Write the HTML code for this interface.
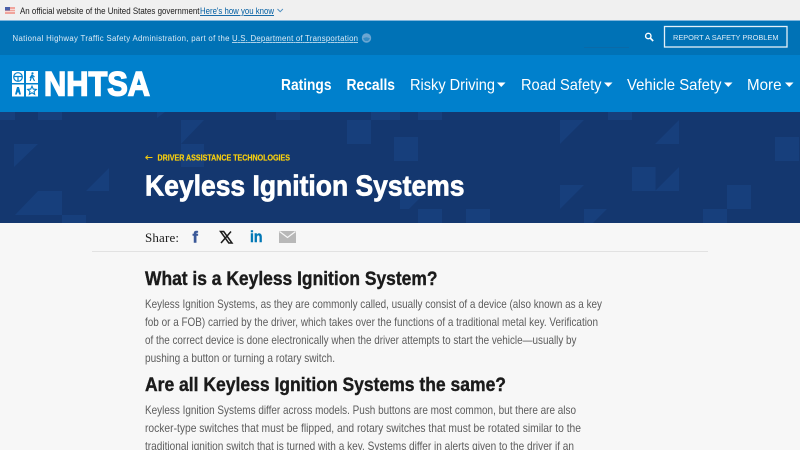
<!DOCTYPE html>
<html lang="en"><head><meta charset="utf-8"><title>Keyless Ignition Systems | NHTSA</title>
<style>
html,body{margin:0;padding:0;width:800px;height:450px;overflow:hidden;background:#f7f7f7}
svg{display:block}
text{font-family:"Liberation Sans",sans-serif}
.p{font-size:11.6px;fill:#5c5c5c}
.h{font-size:19.5px;font-weight:700;fill:#1b1b1b;stroke:#1b1b1b;stroke-width:.4px}
.n{font-size:15.6px;fill:#fff}
.g{font-size:7.8px;fill:#dcebf6}
</style></head><body>
<svg width="800" height="450" viewBox="0 0 800 450" xmlns="http://www.w3.org/2000/svg">
<rect width="800" height="450" fill="#f7f7f7"/>
<!-- gov banner -->
<rect width="800" height="21" fill="#f0f0f0"/>
<rect y="20" width="800" height="1" fill="#7fb5dc"/>
<rect x="5" y="7" width="10" height="7" fill="#f0a49c"/><rect x="5" y="9" width="10" height="1" fill="#f7d8d4"/><rect x="5" y="11" width="10" height="1" fill="#f7d8d4"/><rect x="5" y="7" width="5" height="3.500" fill="#4a5fa8"/>
<text x="20" y="14" font-size="9" fill="#1b1b1b" textLength="179.500" lengthAdjust="spacingAndGlyphs">An official website of the United States government</text>
<text x="200" y="14" font-size="9" fill="#005ea2" text-decoration="underline" textLength="74" lengthAdjust="spacingAndGlyphs">Here's how you know</text>
<path d="M277.500 9l2.700 2.700 2.700-2.700" fill="none" stroke="#4f8fc0" stroke-width="1"/>
<!-- agency bar -->
<rect y="21" width="800" height="34" fill="#0072b6"/>
<text x="12.500" y="41" class="g" textLength="217" lengthAdjust="spacing">National Highway Traffic Safety Administration, part of the</text>
<text x="232" y="41" class="g" text-decoration="underline" textLength="126" lengthAdjust="spacing">U.S. Department of Transportation</text>
<circle cx="366.500" cy="38" r="4.700" fill="#6ba6d2"/><path d="M363 38.500q3.500-2.500 7 0l-2 2.500h-3z" fill="#0072b6" opacity=".5"/>
<rect x="584" y="47" width="45" height="1" fill="#0a6aa8"/>
<circle cx="648.300" cy="36" r="2.700" fill="none" stroke="#fff" stroke-width="1.400"/><path d="M650.200 38l3 3" stroke="#fff" stroke-width="1.600"/>
<rect x="664.500" y="26.500" width="122.500" height="20.500" fill="none" stroke="#e4f0f8" stroke-width="1.300"/>
<text x="673" y="40" font-size="7.400" fill="#dcebf6" textLength="105.500" lengthAdjust="spacing">REPORT A SAFETY PROBLEM</text>
<!-- main nav -->
<rect y="55" width="800" height="57" fill="#0080cc"/>
<rect x="12" y="71" width="12" height="12" fill="#fff"/><rect x="26" y="71" width="12" height="12" fill="#fff"/><rect x="12" y="84.500" width="12" height="12" fill="#fff"/><rect x="26" y="84.500" width="12" height="12" fill="#fff"/>
<circle cx="18" cy="77" r="4.300" fill="none" stroke="#0080cc" stroke-width="1.200"/><path d="M14 76.500h8M18 77v4" stroke="#0080cc" stroke-width="1.200"/>
<circle cx="32.500" cy="73.300" r="1.100" fill="#0080cc"/><path d="M32 75l-1.800 6M32.200 76.500l2.300 4.500M30 78l2-3 2.500 2" fill="none" stroke="#0080cc" stroke-width="1.200"/>
<path d="M15 94.500l2-7.500h2l2 7.500h-2l-.3-2h-1.400l-.3 2z" fill="#0080cc"/>
<path d="M32 86.200l1.300 2.900 3 .3-2.300 2 .7 3-2.700-1.600-2.700 1.600.7-3-2.300-2 3-.3z" fill="none" stroke="#0080cc" stroke-width="1.100"/>
<text x="44" y="95.700" font-size="34.500" font-weight="700" fill="#fff" stroke="#fff" stroke-width="1.500" textLength="106" lengthAdjust="spacingAndGlyphs">NHTSA</text>
<text x="281" y="90" class="n" font-weight="700" textLength="50.500" lengthAdjust="spacingAndGlyphs">Ratings</text>
<text x="346.500" y="90" class="n" font-weight="700" textLength="48.500" lengthAdjust="spacingAndGlyphs">Recalls</text>
<text x="410" y="90" class="n" textLength="85" lengthAdjust="spacingAndGlyphs">Risky Driving</text>
<path d="M497 82.500h8.500l-4.250 4.500z" fill="#fff"/>
<text x="521" y="90" class="n" textLength="80.500" lengthAdjust="spacingAndGlyphs">Road Safety</text>
<path d="M604 82.500h8.500l-4.250 4.500z" fill="#fff"/>
<text x="627" y="90" class="n" textLength="94.500" lengthAdjust="spacingAndGlyphs">Vehicle Safety</text>
<path d="M724 82.500h8.500l-4.250 4.500z" fill="#fff"/>
<text x="747" y="90" class="n" textLength="34.500" lengthAdjust="spacingAndGlyphs">More</text>
<path d="M785 82.500h8.500l-4.250 4.500z" fill="#fff"/>
<!-- hero -->
<rect y="112" width="800" height="111" fill="#14376f"/>
<path fill="#173f7c" d="M0 112h15v8H0zM38 112h24v8H38zM157 112h8l-8 6zM276 112h24v8h-24zM371 112h29v8h-29zM418 112h24v8h-24zM608 112h24v8h-24zM347 120h24v24h-24zM181 144h23v23h-23zM394 137h24v24h-24zM775 137h24v24h-24zM632 167h23.500v24H632zM38 191h24v24H38zM727 185h24v24h-24zM418 209h24v14h-24zM466 209h24v14h-24zM703 209h24v14h-24zM62 215h24v8H62zM181 120h23l-23 24zM14 144h24l-24 23zM560 120h24l-24 24zM560 185h24l-24 24zM584 209h23l-14 14h-9zM679 120v24h-24zM109 168v23H86zM38 191v24H15zM679 167v24h-24zM427 191l-18 18h-9v-18z"/>
<path d="M145.500 157.500h7M145.500 157.500l2.500-2M145.500 157.500l2.500 2" fill="none" stroke="#f2c80f" stroke-width="1"/>
<text x="157.500" y="160.500" font-size="8.200" font-weight="700" fill="#f7ce0e" stroke="#f7ce0e" stroke-width=".2" textLength="132.500" lengthAdjust="spacingAndGlyphs">DRIVER ASSISTANCE TECHNOLOGIES</text>
<text x="145" y="195.500" font-size="29" font-weight="700" fill="#fff" stroke="#fff" stroke-width=".7" textLength="319.500" lengthAdjust="spacingAndGlyphs">Keyless Ignition Systems</text>
<!-- share -->
<text x="145" y="242" font-size="13px" fill="#1b1b1b" style="font-family:'Liberation Serif',serif" textLength="34" lengthAdjust="spacing">Share:</text>
<text x="192.500" y="242.500" font-size="16" font-weight="700" fill="#3b5998" stroke="#3b5998" stroke-width=".5">f</text>
<path d="M220.500 231.500h3.200l8.300 11.500h-3.200zM231 231.500l-10 11.500" fill="none" stroke="#1b1b1b" stroke-width="1.500"/>
<text x="250" y="242" font-size="15.500" font-weight="700" fill="#0077b5" stroke="#0077b5" stroke-width=".4" textLength="12.500" lengthAdjust="spacingAndGlyphs">in</text>
<rect x="279" y="231" width="17" height="12" fill="#b8b8b8"/><path d="M279.500 231.500l8 6 8-6" fill="none" stroke="#f7f7f7" stroke-width="1.200"/>
<rect x="92" y="251" width="616" height="1" fill="#e2e2e2"/>
<!-- article -->
<text x="145" y="285" class="h" textLength="292.500" lengthAdjust="spacingAndGlyphs">What is a Keyless Ignition System?</text>
<text x="145" y="308" class="p" textLength="457" lengthAdjust="spacingAndGlyphs">Keyless Ignition Systems, as they are commonly called, usually consist of a device (also known as a key</text>
<text x="145" y="326" class="p" textLength="453" lengthAdjust="spacingAndGlyphs">fob or a FOB) carried by the driver, which takes over the functions of a traditional metal key. Verification</text>
<text x="145" y="344" class="p" textLength="431.500" lengthAdjust="spacingAndGlyphs">of the correct device is done electronically when the driver attempts to start the vehicle—usually by</text>
<text x="145" y="362" class="p" textLength="190" lengthAdjust="spacingAndGlyphs">pushing a button or turning a rotary switch.</text>
<text x="145" y="391" class="h" textLength="361" lengthAdjust="spacingAndGlyphs">Are all Keyless Ignition Systems the same?</text>
<text x="145" y="414" class="p" textLength="431" lengthAdjust="spacingAndGlyphs">Keyless Ignition Systems differ across models. Push buttons are most common, but there are also</text>
<text x="145" y="432" class="p" textLength="436" lengthAdjust="spacingAndGlyphs">rocker-type switches that must be flipped, and rotary switches that must be rotated similar to the</text>
<text x="145" y="450" class="p" textLength="429" lengthAdjust="spacingAndGlyphs">traditional ignition switch that is turned with a key. Systems differ in alerts given to the driver if an</text>
</svg>
</body></html>
